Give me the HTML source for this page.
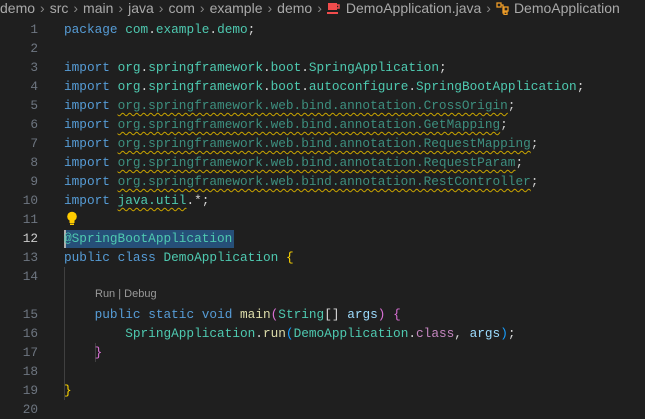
<!DOCTYPE html>
<html><head><meta charset="utf-8"><style>
html,body{margin:0;padding:0;background:#1f1f1f;width:645px;height:418px;overflow:hidden}
.bc{position:absolute;top:0;left:0;height:20px;line-height:18px;font:14px "Liberation Sans",sans-serif;color:#a9a9a9;white-space:nowrap;padding-left:0}
.bc .s{color:#888;margin:0 5px}
.ln{position:absolute;left:0;width:38px;text-align:right;color:#6e7681;font:12.75px "Liberation Mono",monospace;line-height:19px}
.code{position:absolute;left:64px;font:12.75px "Liberation Mono",monospace;line-height:19px;white-space:pre;color:#d4d4d4}
.k{color:#569cd6}.t{color:#4ec9b0}.d{color:#3d8f7f}.f{color:#dcdcaa}.v{color:#9cdcfe}
.y{color:#ffd700}.p{color:#da70d6}.b{color:#179fff}.c{color:#c586c0}.w{color:#cccccc}
.u{text-decoration:underline wavy #c9a400;text-decoration-thickness:1px;text-underline-offset:3px}
.g{position:absolute;width:1px;background:#404040}
.lens{position:absolute;left:95px;top:288px;font:11px "Liberation Sans",sans-serif;color:#999}
</style></head><body>
<div class="bc">demo<span class="s">›</span>src<span class="s">›</span>main<span class="s">›</span>java<span class="s">›</span>com<span class="s">›</span>example<span class="s">›</span>demo<span class="s">›</span><svg width="14" height="13" viewBox="0 0 14 13" style="vertical-align:-2px;margin-right:5px"><rect x="1" y="1" width="9" height="7" fill="#f14c4c"/><path d="M10 3h2v3h-2" stroke="#f14c4c" stroke-width="1.5" fill="none"/><rect x="0" y="10" width="11" height="2" fill="#f14c4c"/></svg>DemoApplication.java<span class="s">›</span><svg width="14" height="14" viewBox="0 0 14 14" style="vertical-align:-2px;margin-right:4px" fill="none" stroke="#ee9d28" stroke-width="1.3"><rect x="1" y="2" width="4" height="4"/><rect x="8" y="6" width="4" height="4"/><rect x="8" y="11" width="3" height="2.5"/><path d="M5 4h2v4h1M7 8v4h1"/></svg>DemoApplication</div>

<div class="g" style="left:64px;top:267px;height:133px"></div>
<div class="g" style="left:95px;top:343px;height:19px"></div>

<div class="ln" style="top:20px">1<br>2<br>3<br>4<br>5<br>6<br>7<br>8<br>9<br>10<br>11<br><span style="color:#cccccc">12</span><br>13<br>14<br><br>15<br>16<br>17<br>18<br>19<br>20</div>

<div style="position:absolute;left:64px;top:230px;width:170px;height:18px;background:#264f78"></div>
<div style="position:absolute;left:64px;top:230px;width:2px;height:18px;background:#aeafad"></div>

<svg style="position:absolute;left:66px;top:211px" width="12" height="15" viewBox="0 0 12 15"><circle cx="6" cy="5.5" r="4.8" fill="#ffcc00"/><rect x="3.5" y="9" width="5" height="3" fill="#ffcc00"/><rect x="4" y="12.5" width="4" height="1.5" fill="#ffcc00"/></svg>

<div class="lens">Run | Debug</div>

<div class="code" style="top:20px"><span class="k">package</span> <span class="t">com</span>.<span class="t">example</span>.<span class="t">demo</span>;

<span class="k">import</span> <span class="t">org</span>.<span class="t">springframework</span>.<span class="t">boot</span>.<span class="t">SpringApplication</span>;
<span class="k">import</span> <span class="t">org</span>.<span class="t">springframework</span>.<span class="t">boot</span>.<span class="t">autoconfigure</span>.<span class="t">SpringBootApplication</span>;
<span class="k">import</span> <span class="d u">org.springframework.web.bind.annotation.CrossOrigin</span><span class="w">;</span>
<span class="k">import</span> <span class="d u">org.springframework.web.bind.annotation.GetMapping</span><span class="w">;</span>
<span class="k">import</span> <span class="d u">org.springframework.web.bind.annotation.RequestMapping</span><span class="w">;</span>
<span class="k">import</span> <span class="d u">org.springframework.web.bind.annotation.RequestParam</span><span class="w">;</span>
<span class="k">import</span> <span class="d u">org.springframework.web.bind.annotation.RestController</span><span class="w">;</span>
<span class="k">import</span> <span class="t u">java.util</span>.*;

<span class="t">@SpringBootApplication</span>
<span class="k">public</span> <span class="k">class</span> <span class="t">DemoApplication</span> <span class="y">{</span>


    <span class="k">public</span> <span class="k">static</span> <span class="k">void</span> <span class="f">main</span><span class="p">(</span><span class="t">String</span>[] <span class="v">args</span><span class="p">)</span> <span class="p">{</span>
        <span class="t">SpringApplication</span>.<span class="f">run</span><span class="b">(</span><span class="t">DemoApplication</span>.<span class="c">class</span>, <span class="v">args</span><span class="b">)</span>;
    <span class="p">}</span>

<span class="y">}</span>
</div>
</body></html>
